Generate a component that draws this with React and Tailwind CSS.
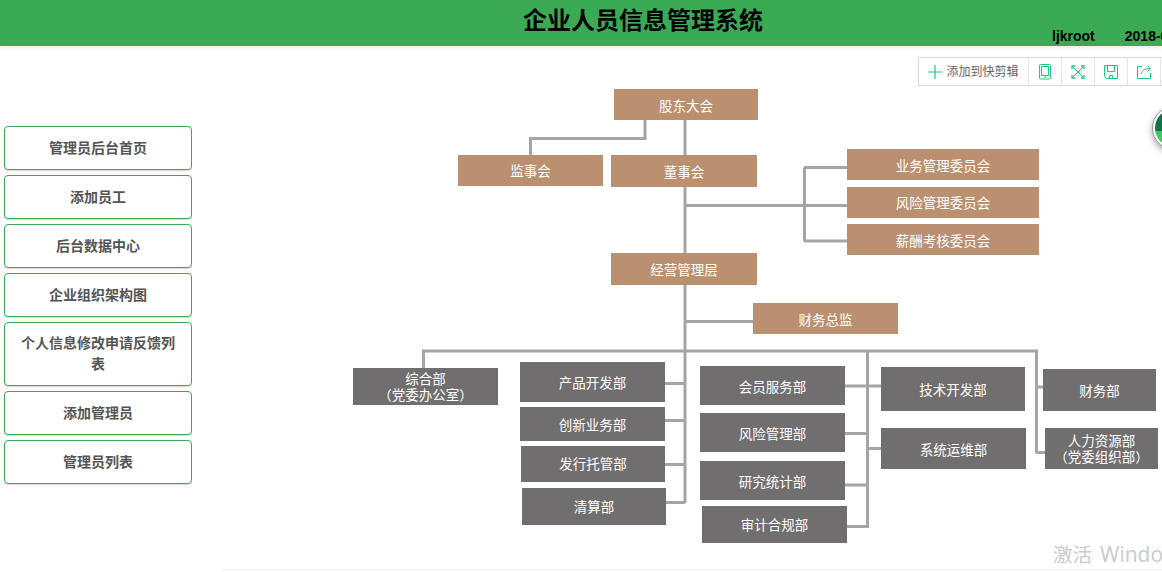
const cjk = "font-['Liberation_Sans','Noto_Sans_CJK_SC',sans-serif]";

const nav = [
  ["管理员后台首页", ""],
  ["添加员工", ""],
  ["后台数据中心", ""],
  ["企业组织架构图", ""],
  ["个人信息修改申请反馈列表", "min-h-[64px]"],
  ["添加管理员", ""],
  ["管理员列表", ""],
];

const tan = "bg-[#ba9070]";
const grey = "bg-[#716e6f]";

const nodes = [
  ["股东大会", null, tan, "left-[392px] top-[43px] w-[144px] h-[31px]"],
  ["监事会", null, tan, "left-[236px] top-[109px] w-[145px] h-[31px] pb-[2px]"],
  ["董事会", null, tan, "left-[389px] top-[109px] w-[146px] h-[32px]"],
  ["经营管理层", null, tan, "left-[389px] top-[207px] w-[146px] h-[32px]"],
  ["财务总监", null, tan, "left-[531px] top-[257px] w-[145px] h-[31px]"],
  ["业务管理委员会", null, tan, "left-[625px] top-[103px] w-[192px] h-[31px]"],
  ["风险管理委员会", null, tan, "left-[625px] top-[141px] w-[192px] h-[31px] pb-[2px]"],
  ["薪酬考核委员会", null, tan, "left-[625px] top-[178px] w-[192px] h-[31px]"],
  ["综合部", "（党委办公室）", grey, "left-[131px] top-[322px] w-[145px] h-[37px] pb-[2px]"],
  ["产品开发部", null, grey, "left-[298px] top-[316px] w-[145px] h-[40px]"],
  ["创新业务部", null, grey, "left-[298px] top-[361px] w-[145px] h-[34px]"],
  ["发行托管部", null, grey, "left-[299px] top-[400px] w-[144px] h-[36px] pb-[2px]"],
  ["清算部", null, grey, "left-[300px] top-[442px] w-[144px] h-[37px] pb-[2px]"],
  ["会员服务部", null, grey, "left-[478px] top-[320px] w-[145px] h-[39px]"],
  ["风险管理部", null, grey, "left-[478px] top-[367px] w-[145px] h-[39px]"],
  ["研究统计部", null, grey, "left-[478px] top-[415px] w-[145px] h-[39px]"],
  ["审计合规部", null, grey, "left-[480px] top-[460px] w-[145px] h-[37px] pb-[2px]"],
  ["技术开发部", null, grey, "left-[659px] top-[321px] w-[144px] h-[44px]"],
  ["系统运维部", null, grey, "left-[659px] top-[382px] w-[145px] h-[41px]"],
  ["财务部", null, grey, "left-[821px] top-[323px] w-[113px] h-[42px]"],
  ["人力资源部", "（党委组织部）", grey, "left-[823px] top-[382px] w-[113px] h-[41px] pb-[2px]"],
];

const lines = [
  "M685 120V503", "M645 120V138.5H530.5V155", "M685 205.5H847", "M804.5 167.5V241",
  "M804 167.5H847", "M804 241H847", "M685 321.5H753",
  "M423.5 368V351H1036.5V453", "M1036 387H1043", "M1036 452.5H1045",
  "M665 383.5H685", "M665 420.5H685", "M665 464.5H685", "M666 502.5H685",
  "M867.5 351V527", "M845 386H881", "M845 433.5H867", "M845 485H867", "M844 526.5H869", "M868 448.5H881",
];

function Tablet() {
  return (
    <svg viewBox="0 0 14 16" className="w-[14px] h-[16px]" fill="none" stroke="#1fc97f" strokeWidth="1">
      <rect x="1.5" y="0.5" width="11" height="14.5" rx="1" />
      <rect x="3.5" y="2.5" width="7" height="9" />
      <path d="M6 13.2H8" />
    </svg>
  );
}
function Expand() {
  return (
    <svg viewBox="0 0 14 14" className="w-[14px] h-[14px]" fill="none" stroke="#1fc97f" strokeWidth="1">
      <path d="M1 4V1H4M10 1H13V4M13 10V13H10M4 13H1V10" strokeWidth="1.3" />
      <path d="M2 2L12 12M12 2L2 12" />
    </svg>
  );
}
function Save() {
  return (
    <svg viewBox="0 0 14 14" className="w-[14px] h-[14px]" fill="none" stroke="#1fc97f" strokeWidth="1">
      <path d="M0.5 0.5H13.5V13.5H2.5L0.5 11.5Z" />
      <path d="M3.5 0.5V6.5H10.5V0.5" />
      <path d="M5.5 13.5V10.5H8.5V13.5" />
    </svg>
  );
}
function Share() {
  return (
    <svg viewBox="0 0 15 14" className="w-[15px] h-[14px]" fill="none" stroke="#1fc97f" strokeWidth="1">
      <path d="M5 1.5H0.5V13.5H13.5V8" />
      <path d="M4.5 9C4.8 5.5 7.5 3.6 13 3.6" />
      <path d="M10.5 0.8L13.6 3.6L10.5 6.4" />
    </svg>
  );
}

function Cell({ children }) {
  return <div className="w-[33px] h-full flex items-center justify-center border-l border-[#e3e3e3]">{children}</div>;
}

export default function App() {
  return (
    <div className={`relative w-[1162px] h-[572px] overflow-hidden bg-white ${cjk}`}>
      <header className="h-[46px] bg-[#3aaa55] flex shadow-[0_2px_4px_rgba(0,0,0,0.08)] whitespace-nowrap">
        <h1 className="ml-[523px] text-[24px] leading-[42px] font-bold text-black">企业人员信息管理系统</h1>
        <span className="ml-[289px] mt-[27px] text-[14px] leading-[18px] font-bold text-black">ljkroot</span>
        <span className="ml-[30px] mt-[27px] text-[14px] leading-[18px] font-bold text-black">2018-06-05</span>
      </header>

      <div className="flex">
        <aside className="w-[222px] pt-[80px] pl-1 flex flex-col gap-[5px]">
          {nav.map(([label, cls]) => (
            <a key={label} className={`w-[188px] min-h-[44px] px-[14px] flex items-center justify-center text-center text-[14px] leading-[21px] font-bold text-[#555] bg-white border border-[#3aaa55] rounded-[4px] shadow-[0_1px_1px_rgba(0,0,0,0.15)] ${cls}`}>
              {label}
            </a>
          ))}
        </aside>

        <main className="relative w-[940px] h-[524px] border-b border-[#eeeeee]">
          <svg viewBox="222 46 940 523" className="absolute left-0 top-0 w-[940px] h-[523px]" fill="none" stroke="#a5a5a5" strokeWidth="3">
            {lines.map((d) => <path key={d} d={d} />)}
          </svg>
          {nodes.map(([a, b, bg, pos]) => (
            <div key={a} className={`absolute ${pos} ${bg} flex flex-col items-center justify-center text-[13.5px] leading-[16px] text-white font-['Noto_Sans_CJK_SC',sans-serif] font-normal`}>
              <div>{a}</div>
              {b && <div>{b}</div>}
            </div>
          ))}
          <div className="absolute right-[-2px] top-[11px] h-[29px] flex items-stretch bg-white border border-[#d8d8d8]">
            <div className="w-[109px] pt-[1px] flex items-center justify-center gap-[4px] text-[12px] text-[#666] whitespace-nowrap">
              <svg viewBox="0 0 14 14" className="w-[14px] h-[14px]" fill="none" stroke="#1fc97f" strokeWidth="1.2">
                <path d="M7 0V14M0 7H14" />
              </svg>
              添加到快剪辑
            </div>
            <Cell><Tablet /></Cell>
            <Cell><Expand /></Cell>
            <Cell><Save /></Cell>
            <Cell><Share /></Cell>
            <div className="w-[3px] border-l border-[#e3e3e3]" />
          </div>
          <div className="absolute left-[930px] top-[60px] w-[44px] h-[44px] rounded-full bg-white border border-[#9a9a9a] p-[2px] shadow-[0_3px_6px_rgba(0,0,0,0.35)]">
            <div className="w-full h-full rounded-full overflow-hidden flex flex-col">
              <div className="h-[22px] bg-[#0d7549]" />
              <div className="flex-1 bg-[#3ec860]" />
            </div>
          </div>
          <div className="absolute left-[831px] top-[495px] leading-[26px] text-[#cbcbcb] whitespace-nowrap font-['Open_Sans','Noto_Sans_CJK_SC',sans-serif]">
            <span className="text-[19.5px]">激活</span>
            <span className="text-[21px] ml-[8px]">Windows</span>
          </div>
        </main>
      </div>
    </div>
  );
}
